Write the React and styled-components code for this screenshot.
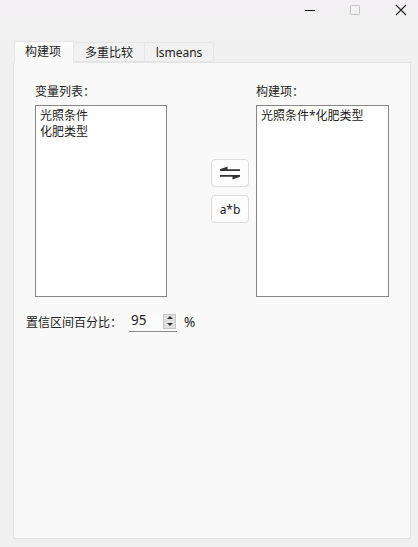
import React from "react";
import styled, { createGlobalStyle } from "styled-components";

const Global = createGlobalStyle`
  html, body { margin: 0; padding: 0; }
  body { background: #f0f0f0; font-family: "Noto Sans", "Noto Sans CJK SC", sans-serif; }
`;
const Win = styled.div`
  width: 418px; height: 547px; display: flex; flex-direction: column; overflow: hidden;
  background: linear-gradient(#f3f1f3 0, #f0f0f0 40px); color: #1c1c1c;
`;
const TitleBar = styled.div`
  height: 41px; flex: none; display: flex; justify-content: flex-end; align-items: flex-start;
  padding: 0 7px 0 0; gap: 26px; box-sizing: border-box;
`;
const WinBtn = styled.svg`width: ${p => p.$w}px; height: 20px; display: block;`;
const Tabs = styled.div`
  height: 21px; flex: none; display: flex; align-items: flex-end; padding-left: 14px; position: relative; z-index: 1;
`;
const Tab = styled.div`
  box-sizing: border-box; width: ${p => p.$w}px; height: ${p => (p.$active ? 22 : 20)}px;
  display: flex; align-items: center; justify-content: center; font-size: 12px; color: #222;
  margin-bottom: ${p => (p.$active ? -1 : 0)}px;
  background: ${p => (p.$active ? "#f9f9f9" : "#f1f1f1")};
  border: 1px solid #e6e6e6; border-bottom: ${p => (p.$active ? "none" : "1px solid #e6e6e6")};
  border-left: ${p => (p.$first ? "1px solid #e6e6e6" : "none")};
  padding-bottom: ${p => (p.$active ? 3 : 0)}px;
  padding-right: ${p => (p.$active ? 2 : 0)}px;
`;
const Panel = styled.div`
  box-sizing: border-box; width: 398px; height: 477px; margin-left: 13px;
  background: #f9f9f9; border: 1px solid #e3e3e3; padding: 21px 21px 0 12px;
  display: flex; flex-direction: column;
`;
const Lists = styled.div`display: flex; padding-left: 9px; align-items: flex-start;`;
const Col = styled.div`display: flex; flex-direction: column; width: ${p => p.$w}px;`;
const Label = styled.div`font-size: 12px; line-height: 16px; height: 21px; color: #222;`;
const ListBox = styled.div`
  box-sizing: border-box; height: 192px; background: #fff; border: 1px solid #868686;
  padding: 2px 4px; font-size: 12px; line-height: 16px; color: #222; white-space: nowrap;
`;
const Mid = styled.div`
  width: 89px; flex: none; padding: 75px 0 0 44px; box-sizing: border-box;
  display: flex; flex-direction: column; gap: 8px;
`;
const Btn = styled.button`
  box-sizing: border-box; width: 38px; height: 28px; padding: 0; background: #fdfdfd;
  border: 1px solid #dcdcdc; border-radius: 4px; font: 12px "Noto Sans", sans-serif; color: #222;
  display: flex; align-items: center; justify-content: center;
`;
const Conf = styled.div`display: flex; align-items: center; margin-top: 15px; font-size: 12px; color: #222; height: 20px;`;
const ConfLabel = styled.div`width: 103px; flex: none;`;
const Spin = styled.div`
  box-sizing: border-box; width: 48px; height: 19px; background: #fbfbfb; border-bottom: 1px solid #8a8a8a;
  display: flex; align-items: flex-start; justify-content: space-between; padding: 1px 1px 0 2px; font-size: 13.5px; line-height: 13px;
`;
const Arrows = styled.div`
  width: 13px; height: 15px; background: #e0e0e0; border: 1px solid #c6c6c6; box-sizing: border-box;
  display: flex; flex-direction: column; align-items: center; justify-content: space-around;
`;
const Arrow = styled.div`
  width: 0; height: 0; border-left: 3px solid transparent; border-right: 3px solid transparent;
  ${p => (p.$up ? "border-bottom: 3px solid #333;" : "border-top: 3px solid #333;")}
`;
const Pct = styled.div`margin: 0 0 1px 7px; font-size: 13.5px; line-height: 16px;`;

export default function App() {
  return (
    <Win>
      <Global />
      <TitleBar>
        <WinBtn $w={14} viewBox="0 0 14 20"><path d="M0 10.5H10" stroke="#111" strokeWidth="1" /></WinBtn>
        <WinBtn $w={20} viewBox="0 0 20 20"><rect x="5.5" y="5.5" width="9" height="9" rx="1" fill="none" stroke="#c4c4c4" /></WinBtn>
        <WinBtn $w={20} viewBox="0 0 20 20"><path d="M5 5L15 15M15 5L5 15" stroke="#222" strokeWidth="1.1" fill="none" /></WinBtn>
      </TitleBar>
      <Tabs>
        <Tab $active $first $w={60}>构建项</Tab>
        <Tab $w={71}>多重比较</Tab>
        <Tab $w={69}>lsmeans</Tab>
      </Tabs>
      <Panel>
        <Lists>
          <Col $w={132}>
            <Label>变量列表：</Label>
            <ListBox><div>光照条件</div><div>化肥类型</div></ListBox>
          </Col>
          <Mid>
            <Btn aria-label="交换">
              <svg width="22" height="18" viewBox="0 0 22 18">
                <path d="M1 5.2H21V7H1zM1 5.2L8.5 2.5V5.2z" fill="#333" />
                <path d="M1 11H21V12.8H1zM21 12.8L13.5 15.5V12.8z" fill="#333" />
              </svg>
            </Btn>
            <Btn>a*b</Btn>
          </Mid>
          <Col $w={133}>
            <Label>构建项：</Label>
            <ListBox>光照条件*化肥类型</ListBox>
          </Col>
        </Lists>
        <Conf>
          <ConfLabel>置信区间百分比：</ConfLabel>
          <Spin>
            <span>95</span>
            <Arrows><Arrow $up /><Arrow /></Arrows>
          </Spin>
          <Pct>%</Pct>
        </Conf>
      </Panel>
    </Win>
  );
}
